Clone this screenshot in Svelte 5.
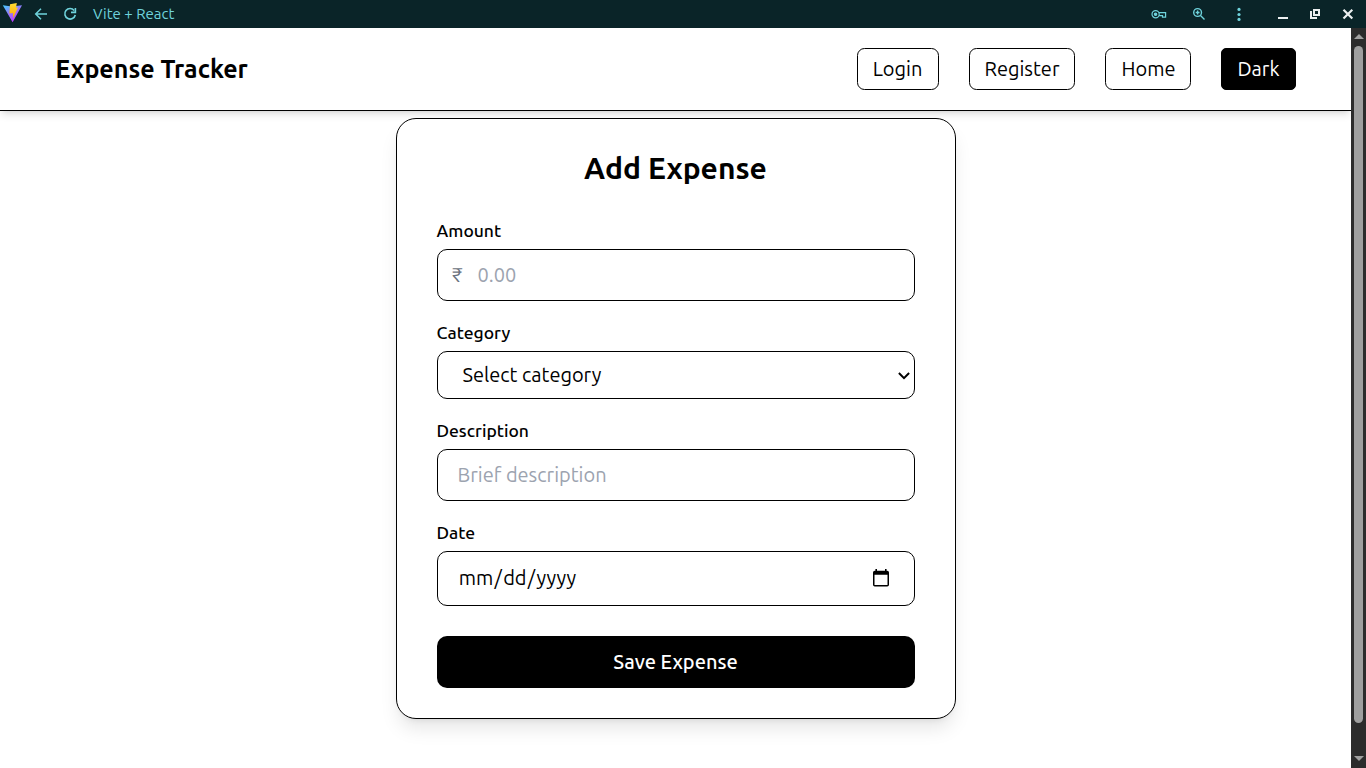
<script>
  const links = [
    { label: 'Login', cls: 'login' },
    { label: 'Register', cls: 'register' },
    { label: 'Home', cls: 'home' },
    { label: 'Dark', cls: 'dark' }
  ];
</script>

<div class="window">
  <div class="titlebar">
    <svg class="logo" width="20" height="20" viewBox="0 0 20 20">
      <defs>
        <linearGradient id="purple" x1="0" y1="0" x2=".6" y2="1">
          <stop offset="0" stop-color="#41d1ff" />
          <stop offset=".55" stop-color="#9b70fa" />
          <stop offset="1" stop-color="#bd34fe" />
        </linearGradient>
        <linearGradient id="bolt" x1="0" y1="0" x2="0" y2="1">
          <stop offset="0" stop-color="#ffdd35" />
          <stop offset="1" stop-color="#ffa800" />
        </linearGradient>
      </defs>
      <path d="M.8 2.2 9.8 3.6 20 2.2 10.6 19.3z" fill="url(#purple)" />
      <path d="M8 1.2 14.8 0 14 4.8 16 4.5 11 15.2 10.9 10 7.4 10.5z" fill="url(#bolt)" />
    </svg>
    <svg class="back" width="14" height="14" viewBox="0 0 14 14" fill="none" stroke="#6fd3dc" stroke-width="1.5">
      <path d="M13 7H2M7 1.7 1.7 7 7 12.3" />
    </svg>
    <svg class="reload" width="14" height="14" viewBox="0 0 14 14" fill="none" stroke="#6fd3dc" stroke-width="1.6">
      <path d="M11.2 3.4A5.3 5.3 0 1 0 12.3 8" />
      <path d="M12.4 1V5.4H8" />
    </svg>
    <span class="tab">Vite + React</span>
    <div class="tools">
      <svg width="16" height="14" viewBox="0 0 16 14" fill="none" stroke="#6fd3dc" stroke-width="1.2">
        <circle cx="4.6" cy="7.2" r="3.6" />
        <circle cx="4.6" cy="7.2" r="1.2" fill="#6fd3dc" />
        <path d="M8 5.6H14.6V10.2H11.5V8.6H8" />
      </svg>
      <svg width="14" height="14" viewBox="0 0 14 14" fill="none" stroke="#6fd3dc" stroke-width="1.4">
        <circle cx="5.6" cy="5.5" r="3.9" />
        <path d="M8.5 8.4 12.5 12.4M5.6 3.6V7.4M3.7 5.5H7.5" />
      </svg>
      <svg width="4" height="14" viewBox="0 0 4 14" fill="#6fd3dc">
        <circle cx="2" cy="2.4" r="1.6" /><circle cx="2" cy="7.5" r="1.6" /><circle cx="2" cy="12.4" r="1.6" />
      </svg>
      <svg width="12" height="14" viewBox="0 0 12 14"><path d="M0 10H10V12H0z" fill="#eceff0" /></svg>
      <svg width="12" height="14" viewBox="0 0 12 14" fill="none" stroke="#eceff0" stroke-width="2">
        <path d="M4 3H9V8H4zM1 4V11H7" />
      </svg>
      <svg width="12" height="14" viewBox="0 0 12 14" stroke="#eceff0" stroke-width="2.2"><path d="M1.5 2.7 10.3 11.5M10.3 2.7 1.5 11.5" /></svg>
    </div>
  </div>

  <div class="viewport">
    <div class="page">
      <header>
        <h1>Expense Tracker</h1>
        <nav>
          {#each links as link}
            <button class={link.cls}><span>{link.label}</span></button>
          {/each}
        </nav>
      </header>

      <main>
        <form>
          <h2>Add Expense</h2>

          <label for="amount">Amount</label>
          <div class="field text">
            <span class="rupee">₹</span>
            <span class="placeholder" id="amount">0.00</span>
          </div>

          <label for="category">Category</label>
          <div class="field select" id="category">
            <span class="choice">Select category</span>
            <svg width="12" height="8" viewBox="0 0 12 8" fill="none" stroke="#000" stroke-width="2"><path d="M.9 1 6 6.1 11.1 1" /></svg>
          </div>

          <label for="description">Description</label>
          <div class="field text" id="description">
            <span class="placeholder">Brief description</span>
          </div>

          <label for="date">Date</label>
          <div class="field date" id="date">
            <span class="mask"><span class="part">mm</span>/<span class="part">dd</span>/<span class="part">yyyy</span></span>
            <svg width="16" height="18" viewBox="0 0 16 18">
              <path d="M2.4 0H4V1.7H12V0H13.6V1.7H14.2Q16 1.7 16 3.4V15.8Q16 17.5 14.2 17.5H1.8Q0 17.5 0 15.8V3.4Q0 1.7 1.8 1.7H2.4zM1.5 5.8V16H14.5V5.8z" fill="#000" fill-rule="evenodd" />
            </svg>
          </div>

          <button type="button" class="save"><span>Save Expense</span></button>
        </form>
      </main>
    </div>

    <div class="scrollbar">
      <svg width="10" height="5" viewBox="0 0 10 5"><path d="M0 5 5 0 10 5z" fill="#a0a0a0" /></svg>
      <div class="thumb"></div>
      <svg class="down" width="10" height="5" viewBox="0 0 10 5"><path d="M0 0H10L5 5z" fill="#a0a0a0" /></svg>
    </div>
  </div>
</div>

<style>
  :global(body) { margin: 0; overflow: hidden; background: #fff; }
  * { box-sizing: border-box; }
  svg { display: block; flex: none; }
  span { white-space: nowrap; }
  .window {
    width: 1366px; height: 768px; display: flex; flex-direction: column; overflow: hidden;
    font-family: Ubuntu, "Noto Sans", sans-serif; color: #000;
  }
  .titlebar { height: 28px; flex: none; background: #0a2428; display: flex; align-items: center; padding: 0 12px 0 2px; }
  .logo { margin-top: -3px; }
  .back { margin-left: 12px; }
  .reload { margin-left: 15px; }
  .tab { margin-left: 16px; color: #6fd3dc; font-size: 15px; line-height: 28px; }
  .tools { margin-left: auto; display: flex; align-items: center; }
  .tools svg:nth-child(2) { margin-left: 25px; }
  .tools svg:nth-child(3) { margin-left: 31px; }
  .tools svg:nth-child(4) { margin-left: 37px; }
  .tools svg:nth-child(5) { margin-left: 20px; }
  .tools svg:nth-child(6) { margin-left: 20px; }

  .viewport { flex: 1; display: flex; min-height: 0; }
  .page { flex: 1; background: #fff; overflow: hidden; }
  header {
    height: 83px; display: flex; align-items: center; justify-content: space-between;
    padding: 0 55px 0 55.5px; border-bottom: 1px solid #000; background: #fff;
    box-shadow: 0 5px 7.5px -1.25px rgba(0,0,0,.1), 0 2.5px 5px -2.5px rgba(0,0,0,.1);
  }
  h1 { margin: 0; font-size: 25px; line-height: 35px; font-weight: 600; white-space: nowrap; }
  nav { display: flex; gap: 30px; }
  button { font: inherit; padding: 0 0 2px; display: flex; align-items: center; justify-content: center; border: 1px solid #000; }
  nav button { height: 42px; border-radius: 7.5px; background: #fff; color: #000; font-size: 20px; font-weight: 400; }
  nav .login { width: 82px; padding-right: 1px; }
  nav .register { width: 106px; }
  nav .home { width: 86px; padding-left: 1px; }
  nav .dark { width: 75px; background: #000; color: #fff; border-radius: 5px; }

  main { display: flex; justify-content: center; padding-top: 7px; }
  form {
    width: 560px; height: 601px; border: 1px solid #000; border-radius: 20px; background: #fff;
    padding: 29px 40px 30px; display: flex; flex-direction: column;
    box-shadow: 0 12.5px 18.75px -3.75px rgba(0,0,0,.1), 0 5px 7.5px -5px rgba(0,0,0,.1);
  }
  h2 { margin: 0 0 31px; font-size: 30px; line-height: 40px; font-weight: 600; text-align: center; }
  label { height: 30px; font-size: 17.5px; line-height: 24px; font-weight: 500; display: block; }
  .field { border: 1px solid #000; border-radius: 10px; display: flex; align-items: center; margin-bottom: 20px; font-size: 20px; line-height: 30px; font-weight: 400; }
  .text { height: 52px; padding: 0 20px; }
  .select { height: 48px; padding: 0 4px 0 25px; justify-content: space-between; }
  .select svg { margin-top: 1px; }
  .date { height: 55px; padding: 0 25px 2px 20px; justify-content: space-between; }
  .part { padding: 0 1.25px; }
  .rupee { width: 26px; margin-left: -6px; color: #6b7280; font-size: 20px; }
  .placeholder { color: #9ca3af; }
  .save { height: 52px; margin-top: 10px; border: 0; border-radius: 10px; background: #000; color: #fff; font-size: 20px; font-weight: 500; }

  .scrollbar { width: 15px; flex: none; background: #2c2c2c; display: flex; flex-direction: column; align-items: center; padding: 6px 0 7px; }
  .thumb { width: 9px; height: 677px; margin-top: 7px; border-radius: 5px; background: #9f9f9f; }
  .down { margin-top: auto; }
</style>
